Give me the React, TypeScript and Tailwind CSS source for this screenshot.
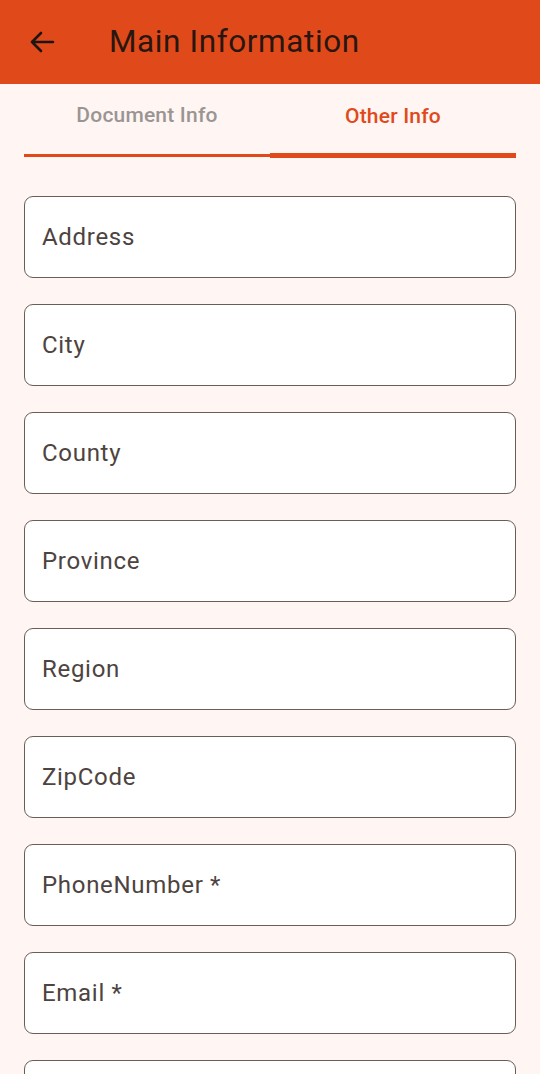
import React from "react";

const fields = ["Address", "City", "County", "Province", "Region", "ZipCode", "PhoneNumber *", "Email *", ""];

export default function App() {
  return (
    <div className="w-[540px] h-[1074px] overflow-hidden bg-[#fff5f3]" style={{ fontFamily: "Roboto, 'Noto Sans', sans-serif" }}>
      <div className="h-[84px] bg-[#e04a1b] flex items-center">
        <svg className="ml-[29px]" width="26" height="24" viewBox="0 0 26 24" fill="none" stroke="#1e1410" strokeWidth="2.6" strokeLinecap="round" strokeLinejoin="round">
          <path d="M24 12H3M12 3L3 12L12 21" />
        </svg>
        <div className="ml-[54px] text-[31.5px] text-[#2a1610] tracking-[0.6px]">Main Information</div>
      </div>
      <div className="mx-[24px] h-[74px] flex">
        <div className="flex-1 flex flex-col">
          <div className="flex-1 flex items-center justify-center text-[21px] font-medium text-[#9a9593] pb-[6px] tracking-[0.2px]">Document Info</div>
          <div className="h-[3px] bg-[#e04a1b]" />
          <div className="h-[1px]" />
        </div>
        <div className="flex-1 flex flex-col">
          <div className="flex-1 flex items-center justify-center text-[21px] font-medium text-[#e04a1b] pb-[4px] tracking-[0.2px]">Other Info</div>
          <div className="h-[5px] bg-[#e04a1b]" />
        </div>
      </div>
      <div className="mt-[38px] mx-[24px] flex flex-col gap-[26px]">
        {fields.map((f, i) => (
          <div key={i} className="h-[82px] shrink-0 rounded-[9px] border-[1.5px] border-[#6a5d58] bg-white flex items-center pl-[17px] text-[24px] text-[#4d4340] tracking-[0.7px]">
            {f}
          </div>
        ))}
      </div>
    </div>
  );
}
